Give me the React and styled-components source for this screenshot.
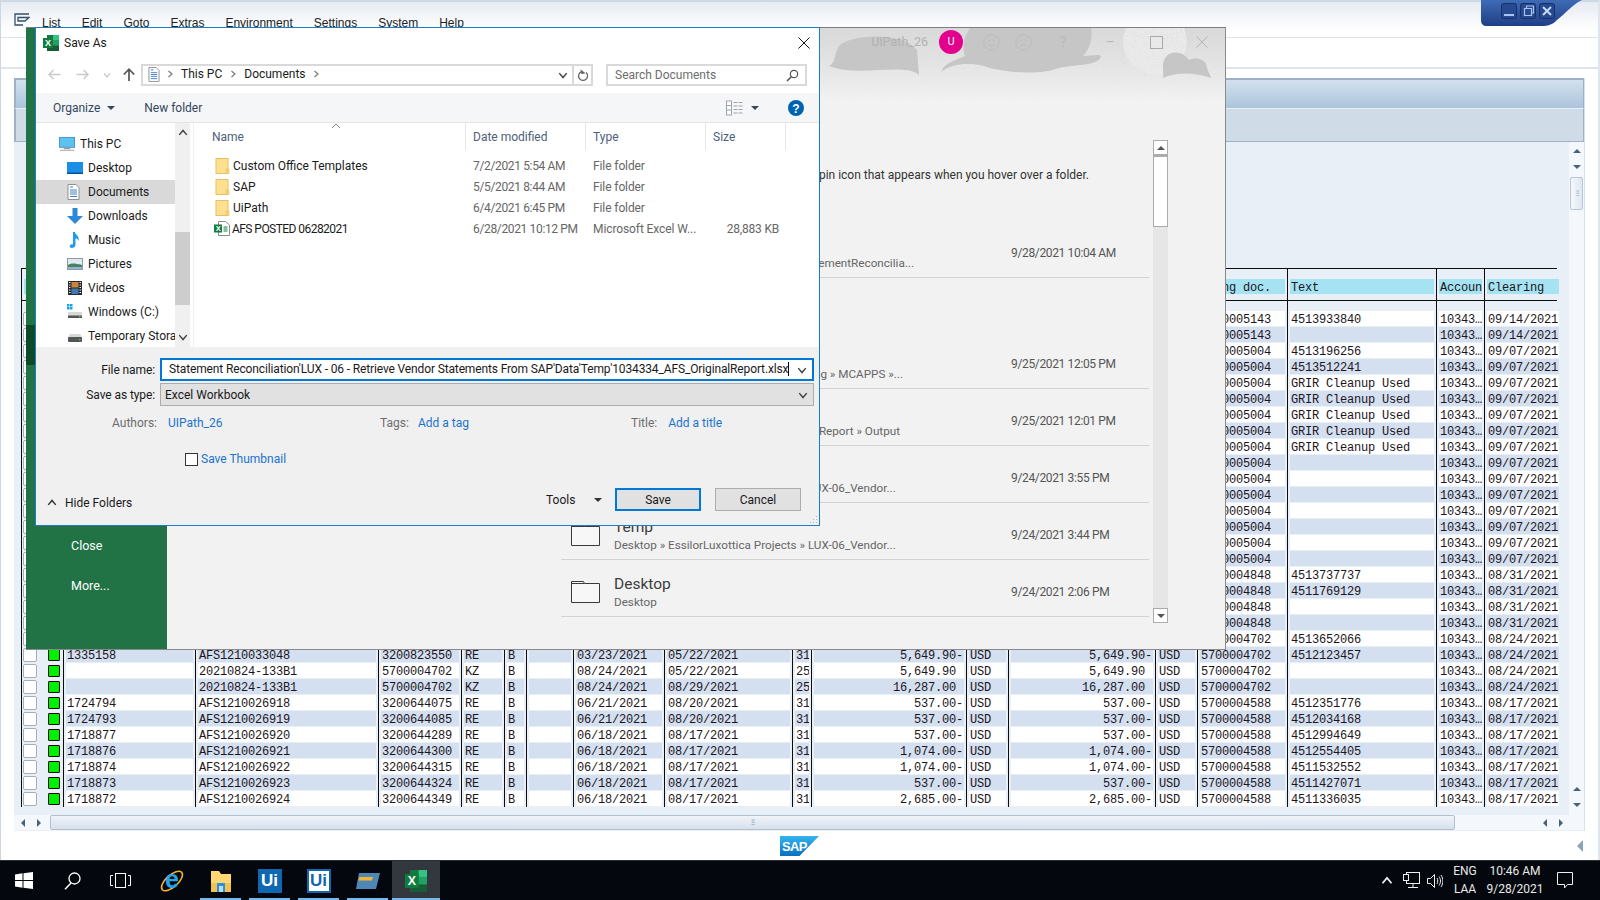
import React from 'react';
import styled, { createGlobalStyle } from 'styled-components';

const Global = createGlobalStyle`
  html, body {
    margin: 0;
    padding: 0;
    width: 1600px;
    height: 900px;
    overflow: hidden;
    background: #fff;
  }
  * { box-sizing: border-box; }
`;

const ui = `Roboto, "Liberation Sans", sans-serif`;

const Screen = styled.div`
  position: relative;
  width: 1600px;
  height: 900px;
  display: flex;
  flex-direction: column;
  font-family: ${ui};
  overflow: hidden;
`;

/* ---------- SAP window (the base of the picture) ---------- */
const SapWindow = styled.div`
  position: relative;
  height: 860px;
  display: flex;
  flex-direction: column;
  background: #fff;
  border-left: 1px solid #ccd5e1;
  border-right: 2px solid #dfe5ee;
  border-top: 2px solid #ced8e5;
`;
const SapMenu = styled.div`
  height: 36px;
  flex: none;
  display: flex;
  align-items: flex-start;
  gap: 21px;
  padding: 14px 0 0 13px;
  background: linear-gradient(#e6ebf3, #fff 80%);
  border-bottom: 1px solid #dfe4ea;
  font: 12px "Liberation Sans", sans-serif;
  color: #222;
`;
const MenuIcon = styled.svg`
  width: 16px;
  height: 13px;
  margin: -3px -9px 0 0;
`;
const SapTools = styled.div`
  height: 31px;
  flex: none;
  border-bottom: 2px solid #dfe4ea;
`;
const Panel = styled.div`
  margin: 9px 0 0 13px;
  width: 1571px;
  height: 753px;
  flex: none;
  display: flex;
  flex-direction: column;
  background: #e9eff7;
  border-right: 1px solid #d8e0ea;
`;
const BandTop = styled.div`
  height: 31px;
  flex: none;
  border-top: 2px solid #9db0c6;
  border-left: 2px solid #9db0c6;
  border-right: 1px solid #9db0c6;
  background: linear-gradient(#d2e1ed, #acc4dc);
  border-bottom: 1px solid #e8f0f7;
`;
const BandBottom = styled.div`
  height: 33px;
  flex: none;
  background: #cfdce8;
  border-left: 2px solid #9db0c6;
  border-right: 1px solid #9db0c6;
  border-bottom: 1px solid #9db0c6;
`;
const Body = styled.div`
  height: 673px;
  flex: none;
  display: flex;
`;
const TableArea = styled.div`
  flex: 1;
  padding: 126px 0 0 7px;
  overflow: hidden;
  font: 12px/18px "Liberation Mono", monospace;
  letter-spacing: -0.2px;
  color: #1b1520;
`;
const Rule = styled.div`
  width: 1536px;
  height: 1px;
  background: #0c0c0c;
`;
const Row = styled.div`
  display: grid;
  grid-template-columns: 43px 132px 183px 83px 43px 22px 47px 91px 128px 19px 155px 42px 147px 42px 90px 149px 48px 76px;
  height: ${({ $h }) => $h}px;
`;
const Cell = styled.div`
  border-right: ${({ $last }) => ($last ? 'none' : '1px solid #0c0c0c')};
  border-left: ${({ $first }) => ($first ? '1px solid #0c0c0c' : 'none')};
  padding-top: ${({ $top }) => $top || 0}px;
  min-width: 0;
`;
const Fill = styled.div`
  height: 15px;
  margin: 0 2px;
  padding: 0 1px;
  white-space: pre;
  overflow: hidden;
  text-align: ${({ $end }) => ($end ? 'right' : 'left')};
  background: ${({ $bg }) => $bg};
`;
const Mark = styled.div`
  display: flex;
  align-items: center;
  height: 15px;
  gap: 11px;
`;
const Check = styled.span`
  width: 14px;
  height: 14px;
  margin-left: 1px;
  background: #fff;
  border: 1px solid #a6aeb8;
  border-radius: 2px;
`;
const Led = styled.span`
  width: 12px;
  height: 12px;
  background: #00f000;
  border: 1px solid #0a0a0a;
  border-radius: 1px;
`;
const VScroll = styled.div`
  width: 15px;
  flex: none;
  display: flex;
  flex-direction: column;
  justify-content: space-between;
  background: #f4f7fb;
  padding: 1px 0 2px;
`;
const ScrollGroup = styled.div`
  display: flex;
  flex-direction: column;
  align-items: center;
`;
const ArrowBox = styled.span`
  width: ${({ $w }) => $w || 15}px;
  height: ${({ $h }) => $h || 16}px;
  flex: none;
  display: flex;
  align-items: center;
  justify-content: center;
  margin-top: ${({ $auto }) => ($auto ? 'auto' : '0')};
`;
const Tri = styled.span`
  width: 0;
  height: 0;
  ${({ $dir, $c, $s }) => {
    const s = $s || 4;
    const c = $c || '#47627f';
    if ($dir === 'up') return `border-left:${s}px solid transparent;border-right:${s}px solid transparent;border-bottom:${s}px solid ${c};`;
    if ($dir === 'down') return `border-left:${s}px solid transparent;border-right:${s}px solid transparent;border-top:${s}px solid ${c};`;
    if ($dir === 'left') return `border-top:${s}px solid transparent;border-bottom:${s}px solid transparent;border-right:${s}px solid ${c};`;
    return `border-top:${s}px solid transparent;border-bottom:${s}px solid transparent;border-left:${s}px solid ${c};`;
  }}
`;
const VThumb = styled.div`
  width: 13px;
  height: 33px;
  margin-top: 2px;
  border: 1px solid #b9c6d6;
  border-radius: 2px;
  background: linear-gradient(90deg, #f5f8fb, #dfe7f0);
  color: #8da0b5;
  font: 8px/31px "Liberation Sans", sans-serif;
  text-align: center;
  letter-spacing: -1px;
`;
const HScroll = styled.div`
  height: 15px;
  flex: none;
  display: flex;
  align-items: center;
  background: #f4f7fb;
  padding-right: 15px;
`;
const HThumb = styled.div`
  width: 1405px;
  height: 15px;
  margin-left: 3px;
  border: 1px solid #b2bfcf;
  border-radius: 2px;
  background: linear-gradient(#f0f4f9, #d6e0ec);
  color: #8da0b5;
  font: 8px/13px "Liberation Sans", sans-serif;
  text-align: center;
  letter-spacing: -1px;
`;
const HEnd = styled.div`
  margin-left: auto;
  display: flex;
`;
const SapFooter = styled.div`
  flex: 1;
  display: grid;
  grid-template-columns: 1fr auto 1fr;
  align-items: center;
`;
const FooterLogo = styled.div`
  grid-column: 2;
  display: flex;
`;
const FooterEnd = styled.div`
  grid-column: 3;
  justify-self: end;
  display: flex;
  padding-right: 15px;
`;
const Badge = styled.div`
  position: absolute;
  top: -2px;
  right: 14px;
  width: 103px;
  height: 27px;
`;

/* ---------- Excel backstage window ---------- */
const ExcelWindow = styled.div`
  position: absolute;
  left: 26px;
  top: 27px;
  width: 1200px;
  height: 623px;
  display: flex;
  border-top: 1px solid #7d7d7d;
  border-right: 1px solid #8a8a8a;
  border-bottom: 1px solid #8a8a8a;
  background: #f2f2f2;
`;
const Sidebar = styled.div`
  width: 141px;
  flex: none;
  background: #217346;
  display: flex;
  flex-direction: column;
  padding-top: 297px;
`;
const SideItem = styled.div`
  height: 40px;
  display: flex;
  align-items: center;
  padding-left: 45px;
  color: #fff;
  font-size: 12.5px;
  background: ${({ $active }) => ($active ? '#0e4a28' : 'transparent')};
`;
const SideGap = styled.div`
  height: 160px;
`;
const ExcelMain = styled.div`
  flex: 1;
  display: flex;
  flex-direction: column;
  min-width: 0;
`;
const TopBar = styled.div`
  position: relative;
  height: 72px;
  flex: none;
  display: flex;
  justify-content: flex-end;
  align-items: flex-start;
  overflow: hidden;
`;
const BannerArt = styled.svg`
  position: absolute;
  inset: 0;
`;
const TopName = styled.span`
  position: relative;
  margin-right: 11px;
  line-height: 28px;
  font-size: 12.5px;
  color: #b2b2b2;
`;
const Avatar = styled.span`
  position: relative;
  width: 24px;
  height: 24px;
  margin: 2px 12px 0 0;
  border-radius: 50%;
  background: #e3008c;
  color: #fff;
  font-size: 11px;
  line-height: 24px;
  text-align: center;
`;
const TopSlot = styled.span`
  position: relative;
  width: ${({ $w }) => $w}px;
  height: 28px;
  display: flex;
  align-items: center;
  justify-content: center;
  color: #b9b9b9;
  font-size: 14px;
`;
const ExcelBody = styled.div`
  flex: 1;
  display: flex;
  padding: 40px 0 0 394px;
`;
const Recents = styled.div`
  width: 588px;
  flex: none;
  color: #444;
`;
const Hint = styled.div`
  width: 528px;
  margin: 26px 0 37px;
  height: 18px;
  line-height: 18px;
  font-size: 12px;
  text-align: right;
  white-space: nowrap;
  color: #333;
`;
const RecentRow = styled.div`
  height: 57px;
  display: grid;
  grid-template-columns: 53px 397px 1fr;
  border-bottom: 1px solid #d2d2d2;
  margin-top: ${({ $mt }) => $mt || 0}px;
`;
const FolderOutline = styled.svg`
  width: 29px;
  height: 23px;
  margin: 20px 0 0 10px;
`;
const RecentText = styled.div`
  padding-top: 14px;
  min-width: 0;
`;
const RecentTitle = styled.div`
  height: 20px;
  font-size: 15.5px;
  line-height: 20px;
  color: #3c3c3c;
`;
const RecentSub = styled.div`
  height: 17px;
  line-height: 17px;
  font-size: 11.7px;
  color: #666;
  white-space: nowrap;
  text-align: ${({ $w }) => ($w ? 'right' : 'left')};
  width: ${({ $w }) => ($w ? `${$w}px` : 'auto')};
`;
const RecentDate = styled.div`
  padding-top: 24px;
  font-size: 12px;
  letter-spacing: -0.35px;
  line-height: 17px;
  color: #555;
`;
const RecentScroll = styled.div`
  width: 15px;
  height: 483px;
  margin-left: 4px;
  flex: none;
  display: flex;
  flex-direction: column;
  background: #e6e6e6;
  justify-content: flex-start;
`;
const RecentButton = styled.div`
  height: 15px;
  flex: none;
  display: flex;
  align-items: center;
  justify-content: center;
  background: #fff;
  border: 1px solid #ababab;
  margin-top: ${({ $auto }) => ($auto ? 'auto' : '0')};
`;
const RecentThumb = styled.div`
  height: 72px;
  flex: none;
  background: #fff;
  border: 1px solid #ababab;
  border-top-width: 2px;
`;

/* ---------- Save As dialog ---------- */
const Dialog = styled.div`
  position: absolute;
  left: 35px;
  top: 27px;
  width: 785px;
  height: 499px;
  display: flex;
  flex-direction: column;
  background: #fff;
  border: 1px solid #1a7dc9;
  color: #1a1a1a;
  font-size: 12px;
`;
const TitleBar = styled.div`
  height: 30px;
  flex: none;
  display: flex;
  align-items: center;
  padding-left: 7px;
  gap: 5px;
`;
const TitleClose = styled.span`
  margin-left: auto;
  width: 30px;
  height: 30px;
  display: flex;
  align-items: center;
  justify-content: center;
`;
const AddressRow = styled.div`
  height: 35px;
  flex: none;
  display: flex;
  align-items: flex-start;
  padding: 6px 0 0 4px;
`;
const NavButton = styled.span`
  width: ${({ $w }) => $w}px;
  height: 21px;
  flex: none;
  display: flex;
  align-items: center;
  justify-content: center;
`;
const Address = styled.div`
  width: 452px;
  height: 22px;
  margin-left: 1px;
  flex: none;
  display: flex;
  align-items: center;
  padding: 0 0 2px 5px;
  border: 2px solid #d9d9d9;
`;
const Crumb = styled.span`
  display: flex;
  align-items: center;
  gap: 7px;
  margin-left: ${({ $ml }) => $ml || 0}px;
`;
const AddressEnd = styled.div`
  margin-left: auto;
  display: flex;
  align-items: center;
  height: calc(100% + 2px);
  margin-bottom: -2px;
`;
const RefreshBox = styled.span`
  width: 19px;
  height: 100%;
  margin-left: 4px;
  border-left: 2px solid #d9d9d9;
  display: flex;
  align-items: center;
  justify-content: center;
`;
const SearchBox = styled.div`
  width: 201px;
  height: 22px;
  margin-left: 13px;
  flex: none;
  display: flex;
  align-items: center;
  justify-content: space-between;
  padding: 0 6px 0 7px;
  border: 2px solid #d9d9d9;
  color: #6d6d6d;
`;
const Toolbar = styled.div`
  height: 30px;
  flex: none;
  display: flex;
  align-items: center;
  padding: 0 15px 0 17px;
  background: #f5f6f7;
  border-bottom: 1px solid #e5e5e5;
  color: #33475f;
`;
const ToolItem = styled.span`
  display: flex;
  align-items: center;
  gap: 7px;
  white-space: nowrap;
  margin-left: ${({ $ml }) => $ml || 0}px;
`;
const ToolRight = styled.span`
  margin-left: auto;
  display: flex;
  align-items: center;
`;
const Browser = styled.div`
  height: 224px;
  flex: none;
  display: flex;
`;
const NavPane = styled.div`
  width: 139px;
  flex: none;
  padding-top: 9px;
  overflow: hidden;
`;
const NavItem = styled.div`
  height: 24px;
  display: flex;
  align-items: center;
  gap: 5px;
  padding-left: ${({ $top }) => ($top ? 23 : 31)}px;
  white-space: nowrap;
  background: ${({ $sel }) => ($sel ? '#d9d9d9' : 'transparent')};
`;
const NavIconBox = styled.span`
  width: 16px;
  height: 16px;
  flex: none;
  display: flex;
`;
const NavScroll = styled.div`
  width: 15px;
  flex: none;
  display: flex;
  flex-direction: column;
  background: #f0f0f0;
`;
const NavThumb = styled.div`
  height: 73px;
  margin-top: 89px;
  flex: none;
  background: #cdcdcd;
`;
const Files = styled.div`
  flex: 1;
  position: relative;
  margin-left: 3px;
  border-left: 1px solid #f0f0f0;
  min-width: 0;
`;
const FileHead = styled.div`
  height: 27px;
  display: grid;
  grid-template-columns: 272px 120px 120px 80px;
  color: #4c607a;
`;
const HeadCell = styled.span`
  display: flex;
  align-items: center;
  padding-left: ${({ $pad }) => $pad}px;
  border-right: 1px solid #e5e5e5;
`;
const SortCaret = styled.svg`
  position: absolute;
  left: 137px;
  top: 0;
  width: 10px;
  height: 6px;
`;
const FileRows = styled.div`
  padding-top: 5px;
`;
const FileRow = styled.div`
  height: 21px;
  display: grid;
  grid-template-columns: 272px 120px 120px 73px;
  align-items: center;
  color: #666;
`;
const FileName = styled.span`
  display: flex;
  align-items: center;
  gap: ${({ $tight }) => ($tight ? 2 : 3)}px;
  padding-left: ${({ $tight }) => ($tight ? 20 : 21)}px;
  letter-spacing: ${({ $tight }) => ($tight ? '-0.55px' : '0')};
  color: #1a1a1a;
`;
const FilePad = styled.span`
  padding-left: 7px;
  white-space: nowrap;
  letter-spacing: ${({ $tight }) => ($tight ? '-0.35px' : '-0.1px')};
`;
const FileSize = styled.span`
  text-align: right;
  letter-spacing: -0.2px;
`;
const FormArea = styled.div`
  position: relative;
  flex: 1;
  background: #f0f0f0;
  padding-top: 11px;
`;
const FieldRow = styled.div`
  display: flex;
  align-items: center;
  height: 23px;
  margin-top: ${({ $mt }) => $mt || 0}px;
`;
const FieldLabel = styled.span`
  width: 119px;
  text-align: right;
  flex: none;
  letter-spacing: -0.1px;
`;
const FileInput = styled.div`
  width: 654px;
  height: 23px;
  margin-left: 5px;
  display: flex;
  align-items: center;
  justify-content: space-between;
  padding: 0 5px 0 7px;
  background: ${({ $grey }) => ($grey ? '#e1e1e1' : '#fff')};
  border: ${({ $grey }) => ($grey ? '1px solid #adadad' : '2px solid #0078d7')};
  white-space: nowrap;
`;
const InputText = styled.span`
  margin-left: ${({ $plain }) => ($plain ? -3 : 0)}px;
  margin-top: ${({ $plain }) => ($plain ? 0 : -2)}px;
  letter-spacing: ${({ $plain }) => ($plain ? '0' : '-0.135px')};
  border-right: ${({ $plain }) => ($plain ? 'none' : '1px solid #000')};
`;
const MetaRow = styled.div`
  height: 18px;
  margin-top: 8px;
  display: flex;
  align-items: center;
  line-height: 18px;
`;
const MetaGroup = styled.span`
  width: ${({ $w }) => $w}px;
  flex: none;
  display: flex;
  color: #6d6d6d;
`;
const MetaLabel = styled.span`
  width: ${({ $w }) => $w}px;
  text-align: right;
  flex: none;
`;
const MetaLink = styled.span`
  color: #1a73d1;
  margin-left: ${({ $ml }) => $ml}px;
`;
const ThumbRow = styled.div`
  height: 18px;
  margin-top: 18px;
  padding-left: 149px;
  display: flex;
  align-items: center;
  gap: 3px;
  color: #1a73d1;
`;
const ThumbBox = styled.span`
  width: 13px;
  height: 13px;
  background: #fff;
  border: 1px solid #333;
`;
const BottomRow = styled.div`
  height: 23px;
  margin-top: 20px;
  display: flex;
  align-items: center;
  padding: 0 18px 0 11px;
`;
const HideFolders = styled.span`
  display: flex;
  align-items: center;
  gap: 8px;
  padding-top: 6px;
`;
const ToolsMenu = styled.span`
  margin-left: auto;
  width: 69px;
  display: flex;
  align-items: center;
  gap: 19px;
`;
const ActionButton = styled.span`
  width: 86px;
  height: 23px;
  margin-left: ${({ $ml }) => $ml || 0}px;
  display: flex;
  align-items: center;
  justify-content: center;
  background: #e1e1e1;
  border: ${({ $primary }) => ($primary ? '2px solid #0078d7' : '1px solid #adadad')};
`;
const Grip = styled.svg`
  position: absolute;
  right: 1px;
  bottom: 1px;
  width: 9px;
  height: 9px;
`;

/* ---------- Windows taskbar ---------- */
const Taskbar = styled.div`
  height: 40px;
  flex: none;
  display: flex;
  align-items: stretch;
  background: #04080e;
  border-top: 1px solid #2b3035;
  color: #e8e8e8;
`;
const TaskSlot = styled.div`
  position: relative;
  width: ${({ $w }) => $w || 48}px;
  flex: none;
  display: flex;
  align-items: center;
  justify-content: center;
  background: ${({ $active }) => ($active ? '#33383e' : 'transparent')};
  margin-left: ${({ $ml }) => $ml || 0}px;
`;
const Running = styled.span`
  position: absolute;
  left: ${({ $full }) => ($full ? 0 : 4)}px;
  right: ${({ $full }) => ($full ? 0 : 4)}px;
  bottom: 0;
  height: 2px;
  background: #76b9ed;
`;
const UiTile = styled.span`
  width: 24px;
  height: 24px;
  display: flex;
  align-items: center;
  justify-content: center;
  font: bold 17px "Liberation Sans", sans-serif;
  background: ${({ $light }) => ($light ? '#fff' : '#0f67b1')};
  color: ${({ $light }) => ($light ? '#0f67b1' : '#fff')};
  border: ${({ $light }) => ($light ? '2px solid #0f67b1' : 'none')};
`;
const Tray = styled.div`
  margin-left: auto;
  display: flex;
  align-items: center;
  padding-right: 15px;
`;
const TrayIcon = styled.span`
  width: ${({ $w }) => $w}px;
  display: flex;
  justify-content: center;
`;
const TrayText = styled.div`
  display: flex;
  flex-direction: column;
  align-items: center;
  gap: 3px;
  font-size: 12px;
  line-height: 15px;
  width: ${({ $w }) => $w}px;
  flex: none;
  margin-left: ${({ $ml }) => $ml || 0}px;
`;

/* ---------- drawings ---------- */
const Excel = ({ size = 16 }) => (
  <svg width={size} height={size} viewBox="0 0 16 16">
    <rect x="4" y="0" width="12" height="16" rx="1" fill="#21a366" />
    <rect x="4" y="0" width="6" height="5" fill="#107c41" />
    <rect x="10" y="0" width="6" height="5" fill="#33c481" />
    <rect x="10" y="5" width="6" height="5.5" fill="#21a366" />
    <rect x="4" y="10.5" width="12" height="5.5" fill="#185c37" />
    <rect x="0" y="3" width="10" height="10" fill="#107c41" />
    <text x="5" y="11" textAnchor="middle" fontSize="9" fontWeight="700" fontFamily="Liberation Sans" fill="#fff">X</text>
  </svg>
);
const YellowFolder = () => (
  <svg width="15" height="16" viewBox="0 0 15 16">
    <rect x="1" y="0.5" width="12" height="15" fill="#ffe08f" stroke="#e5c165" />
    <rect x="11" y="11" width="3" height="4.5" fill="#f5d277" stroke="#e5c165" strokeWidth=".6" />
  </svg>
);
const XlsxFile = () => (
  <svg width="16" height="15" viewBox="0 0 16 15">
    <path d="M4.5.5h7l4 3.5v10.500h-11z" fill="#fff" stroke="#8b8b8b" />
    <rect x="0" y="3.500" width="8" height="8" fill="#107c41" />
    <text x="4" y="10" textAnchor="middle" fontSize="7.500" fontWeight="700" fontFamily="Liberation Sans" fill="#fff">X</text>
    <path d="M9.500 6h4M9.500 8h4M9.500 10h4" stroke="#107c41" />
  </svg>
);
const DocIcon = ({ size = 13 }) => (
  <svg width={size} height={size + 3} viewBox="0 0 13 16">
    <path d="M1 .5h8l3 3v12H1z" fill="#fff" stroke="#8f8f8f" />
    <path d="M3 3h3M3 6h7M3 8h7M3 10h7M3 12.500h7" stroke="#3f7fc4" />
  </svg>
);
const Chevron = ({ dir = 'right', c = '#7a7a7a', s = 8 }) => {
  const d = {
    right: 'M2.500 1l3.500 3-3.500 3',
    down: 'M1 2.500l3 3.500 3-3.500',
    up: 'M1 5.500l3-3.500 3 3.500',
  }[dir];
  return (
    <svg width={s} height={s} viewBox="0 0 8 8">
      <path d={d} fill="none" stroke={c} strokeWidth="1.200" />
    </svg>
  );
};
const ArrowLine = ({ flip, c }) => (
  <svg width="13" height="11" viewBox="0 0 13 11" style={flip ? { transform: 'scaleX(-1)' } : undefined}>
    <path d="M12.500 5.500H1.500M5.500 1L1 5.500 5.500 10" fill="none" stroke={c} strokeWidth="1.400" />
  </svg>
);
const UpArrow = () => (
  <svg width="12" height="13" viewBox="0 0 12 13">
    <path d="M6 13V1.500M.8 6.500L6 1.200l5.200 5.300" fill="none" stroke="#555" strokeWidth="1.700" />
  </svg>
);
const Refresh = () => (
  <svg width="12" height="13" viewBox="0 0 12 13">
    <path d="M4.200 2.800A4.500 4.500 0 1 0 9 3.500" fill="none" stroke="#666" strokeWidth="1.300" />
    <path d="M3.800 0v5H8z" fill="#666" transform="rotate(-12 5 2)" />
  </svg>
);
const Magnifier = () => (
  <svg width="13" height="13" viewBox="0 0 13 13">
    <circle cx="8" cy="5" r="3.700" fill="none" stroke="#555" strokeWidth="1.200" />
    <path d="M5.300 7.700L1 12" stroke="#555" strokeWidth="1.600" />
  </svg>
);
const Close = ({ c = '#111', s = 12 }) => (
  <svg width={s} height={s} viewBox="0 0 12 12">
    <path d="M.5.500l11 11M11.500.500l-11 11" stroke={c} fill="none" />
  </svg>
);
const ViewIcon = () => (
  <svg width="17" height="16" viewBox="0 0 17 16">
    <rect x=".5" y="1" width="5" height="14" fill="#fff" stroke="#9aa4ae" />
    <path d="M1 5.500h4M1 10h4" stroke="#9aa4ae" />
    <path d="M7.500 2.500h9M7.500 6h9M7.500 9.500h9M7.500 13h9" stroke="#9aa4ae" strokeDasharray="4 1" />
  </svg>
);
const Help = () => (
  <svg width="16" height="16" viewBox="0 0 16 16">
    <circle cx="8" cy="8" r="8" fill="#0063b1" />
    <text x="8" y="12.500" textAnchor="middle" fontSize="12" fontWeight="700" fontFamily="Liberation Sans" fill="#fff">?</text>
  </svg>
);
const navIcons = {
  pc: (
    <svg width="17" height="16" viewBox="0 0 17 16">
      <rect x=".5" y="1" width="16" height="10.500" fill="#5cc3f0" stroke="#4a91c7" />
      <rect x="5" y="12" width="7" height="1.500" fill="#9a9a9a" />
      <rect x="1" y="14" width="15" height="1.500" fill="#bdbdbd" />
    </svg>
  ),
  desktop: (
    <svg width="16" height="16" viewBox="0 0 16 16">
      <rect x="0" y="2" width="16" height="12" fill="#1b8fe8" />
      <rect x="0" y="12.500" width="16" height="1.500" fill="#0a4e95" />
    </svg>
  ),
  documents: <DocIcon size={13} />,
  downloads: (
    <svg width="16" height="16" viewBox="0 0 16 16">
      <path d="M5.500 0h5v8H16l-8 8-8-8h5.500z" fill="#2f88d8" />
    </svg>
  ),
  music: (
    <svg width="16" height="16" viewBox="0 0 16 16">
      <path d="M6 0h2c0 3 5 3.500 3.500 9C11 7 9.500 6.500 8.500 6.500V13c0 2-2 3-4 3s-2.500-2-1-3.200C4 12 5 12 6 12.500z" fill="#1e9be9" />
    </svg>
  ),
  pictures: (
    <svg width="16" height="16" viewBox="0 0 16 16">
      <rect x=".5" y="2.500" width="15" height="11" fill="#dfe9f3" stroke="#8f9aa5" />
      <path d="M1 9c3-2 6-2 14 0v4H1z" fill="#4d7f5e" />
      <rect x="1" y="11" width="14" height="2" fill="#8fb5d6" />
    </svg>
  ),
  videos: (
    <svg width="16" height="16" viewBox="0 0 16 16">
      <rect x="1" y="1" width="14" height="14" fill="#2b2b2b" />
      <rect x="4.500" y="2" width="7" height="5.500" fill="#c9843f" />
      <rect x="4.500" y="8.500" width="7" height="5.500" fill="#3f79b5" />
      <path d="M2 2.500h1.500M2 5h1.500M2 7.500h1.500M2 10h1.500M2 12.500h1.500M12.500 2.500H14M12.500 5H14M12.500 7.500H14M12.500 10H14M12.500 12.500H14" stroke="#eee" />
    </svg>
  ),
  windows: (
    <svg width="16" height="16" viewBox="0 0 16 16">
      <path d="M0 0h2.500v2.500H0zM3 0h2.500v2.500H3zM0 3h2.500v2.500H0zM3 3h2.500v2.500H3z" fill="#19a3e8" />
      <rect x="1" y="8" width="14" height="6" rx="1" fill="#d8d8d8" />
      <rect x="1" y="11.500" width="14" height="2.500" fill="#555" />
      <rect x="12" y="12" width="1.500" height="1.200" fill="#4bd34b" />
    </svg>
  ),
  drive: (
    <svg width="16" height="16" viewBox="0 0 16 16">
      <path d="M3 6h10l2 3H1z" fill="#d8d8d8" />
      <rect x="1" y="9" width="14" height="5" rx="1" fill="#555" />
      <rect x="12" y="11" width="1.500" height="1.200" fill="#4bd34b" />
    </svg>
  ),
};
const FolderLine = () => (
  <FolderOutline viewBox="0 0 29 23">
    <path d="M.5 22.500V1.500h12l1 2h15v19z" fill="#f7f7f7" stroke="#3a3a3a" />
    <path d="M.5 3.500h13" stroke="#3a3a3a" />
  </FolderOutline>
);
const Banner = () => (
  <BannerArt width="1058" height="72" viewBox="168 28 1058 72">
    <defs>
      <linearGradient id="fade" x1="0" y1="0" x2="0" y2="1">
        <stop offset="0" stopColor="#d8d8d8" />
        <stop offset="1" stopColor="#f2f2f2" />
      </linearGradient>
      <linearGradient id="speckFade" x1="0" y1="0" x2="0" y2="1">
        <stop offset="0" stopColor="#fff" stopOpacity=".9" />
        <stop offset="1" stopColor="#fff" stopOpacity="0" />
      </linearGradient>
      <mask id="speckMask">
        <rect x="168" y="28" width="1058" height="72" fill="url(#speckFade)" />
      </mask>
      <filter id="speck" x="0" y="0" width="100%" height="100%">
        <feTurbulence type="fractalNoise" baseFrequency="1.100" numOctaves="2" seed="4" />
        <feColorMatrix values="0 0 0 0 .72 0 0 0 0 .72 0 0 0 0 .72 3 0 0 0 -1.300" />
      </filter>
    </defs>
    <rect x="168" y="28" width="1058" height="72" fill="url(#fade)" />
    <circle cx="1156" cy="42" r="32" fill="#ebebeb" />
    <rect x="168" y="28" width="1058" height="72" filter="url(#speck)" mask="url(#speckMask)" />
    <g fill="#c6c6c6">
      <path d="M830 66C838 62 835 50 842 44C856 34 905 32 918 50L920 75C905 62 860 78 830 66Z" />
      <path d="M942 72C946 62 958 60 966 56C962 46 966 34 972 27L1092 27C1094 40 1090 50 1084 56C1092 56 1100 54 1102 56C1100 66 1078 64 1060 68C1040 76 1000 72 985 66C968 62 952 64 942 72Z" />
      <path d="M1164 78C1166 70 1160 62 1170 54C1178 50 1186 54 1190 60C1198 56 1208 60 1208 68L1212 78C1196 72 1176 72 1164 78Z" />
    </g>
  </BannerArt>
);
const Face = ({ sad }) => (
  <svg width="17" height="17" viewBox="0 0 17 17">
    <circle cx="8.500" cy="8.500" r="7.800" fill="none" stroke="#bcbcbc" />
    <circle cx="6" cy="6.500" r=".9" fill="#bcbcbc" />
    <circle cx="11" cy="6.500" r=".9" fill="#bcbcbc" />
    <path d={sad ? 'M5 12c2-2 5-2 7 0' : 'M5 10.500c2 2 5 2 7 0'} fill="none" stroke="#bcbcbc" />
  </svg>
);
const WindowBadge = () => (
  <svg width="103" height="27" viewBox="0 0 103 27">
    <defs>
      <linearGradient id="badge" x1="0" y1="0" x2="0" y2="1">
        <stop offset="0" stopColor="#3e6bb5" />
        <stop offset="1" stopColor="#1f3f86" />
      </linearGradient>
    </defs>
    <path d="M0 0H101C92 4 84 14 76 20C72 24 68 26 60 26H6C2 26 0 24 0 20Z" fill="url(#badge)" />
    <g fill="#26498f" stroke="#16306c">
      <rect x="20.500" y="3.500" width="15" height="15" rx="2" />
      <rect x="39.500" y="3.500" width="15" height="15" rx="2" />
      <rect x="58.500" y="3.500" width="15" height="15" rx="2" />
    </g>
    <rect x="23" y="14" width="10" height="2" fill="#a8c4f0" />
    <path d="M43.500 8.500h7v7h-7zM45.500 8.500v-2.500h7v7h-2" fill="none" stroke="#a8c4f0" strokeWidth="1.200" />
    <path d="M62 7l8 8M70 7l-8 8" stroke="#c6d8f5" strokeWidth="2" />
  </svg>
);
const SapLogo = () => (
  <svg width="39" height="20" viewBox="0 0 39 20">
    <defs>
      <linearGradient id="sap" x1="0" y1="0" x2="0" y2="1">
        <stop offset="0" stopColor="#33b5ee" />
        <stop offset="1" stopColor="#0a6fc2" />
      </linearGradient>
    </defs>
    <path d="M0 0H39L19.500 20H0Z" fill="url(#sap)" />
    <text x="2" y="14.500" fontSize="13" fontWeight="700" fontFamily="Liberation Sans" fill="#fff" letterSpacing="-.6">SAP</text>
  </svg>
);
const WinLogo = () => (
  <svg width="18" height="17" viewBox="0 0 18 17">
    <path d="M0 2.400L7.500 1.300V8H0zM8.500 1.200L18 0v8H8.500zM0 9h7.500v6.700L0 14.600zM8.500 9H18v8l-9.500-1.200z" fill="#fff" />
  </svg>
);
const TaskSearch = () => (
  <svg width="17" height="18" viewBox="0 0 17 18">
    <circle cx="10.500" cy="6.500" r="5.500" fill="none" stroke="#fff" strokeWidth="1.300" />
    <path d="M7 11L1 17.300" stroke="#fff" strokeWidth="1.500" />
  </svg>
);
const TaskView = () => (
  <svg width="21" height="15" viewBox="0 0 21 15">
    <rect x="5.500" y=".5" width="10" height="14" fill="none" stroke="#fff" />
    <path d="M3 2.500H.5v10H3M18 2.500h2.500v10H18" fill="none" stroke="#fff" />
  </svg>
);
const IeIcon = () => (
  <svg width="26" height="26" viewBox="0 0 26 26">
    <ellipse cx="13" cy="13" rx="13" ry="6" transform="rotate(-42 13 13)" fill="none" stroke="#f0b428" strokeWidth="1.600" />
    <text x="13" y="20" textAnchor="middle" fontSize="25" fontWeight="700" fontFamily="Liberation Sans" fill="#27a3e8">e</text>
  </svg>
);
const ExplorerIcon = () => (
  <svg width="22" height="22" viewBox="0 0 22 22">
    <path d="M1 1h8l2 3h10v18H1z" fill="#ffd873" />
    <rect x="1" y="13" width="20" height="9" fill="#f2c14e" />
    <rect x="7" y="13" width="8" height="9" fill="#2f8ee0" />
    <rect x="9" y="16" width="4" height="6" fill="#b7defa" />
  </svg>
);
const SapLogon = () => (
  <svg width="24" height="16" viewBox="0 0 24 16">
    <path d="M3 0H24L20 16H0z" fill="#4f86b5" />
    <path d="M3.500 4H17l-1 3.500H2.500z" fill="#f2b632" />
  </svg>
);
const TrayNet = () => (
  <svg width="17" height="18" viewBox="0 0 17 18">
    <rect x="3.500" y=".5" width="13" height="11" fill="none" stroke="#eee" />
    <rect x=".5" y="2.500" width="5" height="6" fill="#04080e" stroke="#eee" />
    <path d="M10 12v3M5 15.500h10" stroke="#eee" />
  </svg>
);
const TrayVolume = () => (
  <svg width="16" height="16" viewBox="0 0 16 16">
    <path d="M.5 5.500h3l4-4v13l-4-4h-3z" fill="none" stroke="#eee" />
    <path d="M10 5c1 2 1 4 0 6M12 3.500c2 3 2 6 0 9M14 2c2.500 4 2.500 8 0 12" fill="none" stroke="#eee" />
  </svg>
);
const TrayNote = () => (
  <svg width="17" height="17" viewBox="0 0 17 17">
    <path d="M.5.500h15v12h-5l-3 3.500v-3.500h-7z" fill="none" stroke="#eee" />
  </svg>
);

/* ---------- data ---------- */
const blue = '#d4dff0';
const head = ['', '', '', '', '', '', '', '', '', '', '', '', '', '', 'Clrng doc.', 'Text', 'Accoun', 'Clearing'];

const tailRows = [
  ['5700005143', '4513933840', '09/14/2021'],
  ['5700005143', '', '09/14/2021'],
  ['5700005004', '4513196256', '09/07/2021'],
  ['5700005004', '4513512241', '09/07/2021'],
  ['5700005004', 'GRIR Cleanup Used', '09/07/2021'],
  ['5700005004', 'GRIR Cleanup Used', '09/07/2021'],
  ['5700005004', 'GRIR Cleanup Used', '09/07/2021'],
  ['5700005004', 'GRIR Cleanup Used', '09/07/2021'],
  ['5700005004', 'GRIR Cleanup Used', '09/07/2021'],
  ['5700005004', '', '09/07/2021'],
  ['5700005004', '', '09/07/2021'],
  ['5700005004', '', '09/07/2021'],
  ['5700005004', '', '09/07/2021'],
  ['5700005004', '', '09/07/2021'],
  ['5700005004', '', '09/07/2021'],
  ['5700005004', '', '09/07/2021'],
  ['5700004848', '4513737737', '08/31/2021'],
  ['5700004848', '4511769129', '08/31/2021'],
  ['5700004848', '', '08/31/2021'],
  ['5700004848', '', '08/31/2021'],
  ['5700004702', '4513652066', '08/24/2021'],
];
const fullRows = [
  ['1335158', 'AFS1210033048', '3200823550', 'RE', '03/23/2021', '05/22/2021', '31', '5,649.90-', '5700004702', '4512123457', '08/24/2021'],
  ['', '20210824-133B1', '5700004702', 'KZ', '08/24/2021', '05/22/2021', '25', '5,649.90 ', '5700004702', '', '08/24/2021'],
  ['', '20210824-133B1', '5700004702', 'KZ', '08/24/2021', '08/29/2021', '25', '16,287.00 ', '5700004702', '', '08/24/2021'],
  ['1724794', 'AFS1210026918', '3200644075', 'RE', '06/21/2021', '08/20/2021', '31', '537.00-', '5700004588', '4512351776', '08/17/2021'],
  ['1724793', 'AFS1210026919', '3200644085', 'RE', '06/21/2021', '08/20/2021', '31', '537.00-', '5700004588', '4512034168', '08/17/2021'],
  ['1718877', 'AFS1210026920', '3200644289', 'RE', '06/18/2021', '08/17/2021', '31', '537.00-', '5700004588', '4512994649', '08/17/2021'],
  ['1718876', 'AFS1210026921', '3200644300', 'RE', '06/18/2021', '08/17/2021', '31', '1,074.00-', '5700004588', '4512554405', '08/17/2021'],
  ['1718874', 'AFS1210026922', '3200644315', 'RE', '06/18/2021', '08/17/2021', '31', '1,074.00-', '5700004588', '4511532552', '08/17/2021'],
  ['1718873', 'AFS1210026923', '3200644324', 'RE', '06/18/2021', '08/17/2021', '31', '537.00-', '5700004588', '4511427071', '08/17/2021'],
  ['1718872', 'AFS1210026924', '3200644349', 'RE', '06/18/2021', '08/17/2021', '31', '2,685.00-', '5700004588', '4511336035', '08/17/2021'],
];
const rightOnly = tailRows.map(([doc, text, date]) => ['', '', '', '', '', '', '', '', '', '', '', '', '', '', doc, text, '10343…', date]);
const fullCols = fullRows.map(([a, b, c, d, e, f, g, amt, doc, text, date]) => ['', a, b, c, d, 'B', '', e, f, g, amt, 'USD', amt, 'USD', doc, text, '10343…', date]);
const rows = [...rightOnly, ...fullCols];
const amountCols = [10, 12];

const navItems = [
  ['pc', 'This PC', true],
  ['desktop', 'Desktop'],
  ['documents', 'Documents', false, true],
  ['downloads', 'Downloads'],
  ['music', 'Music'],
  ['pictures', 'Pictures'],
  ['videos', 'Videos'],
  ['windows', 'Windows (C:)'],
  ['drive', 'Temporary Storage (D:)'],
];
const recent = [
  { sub: 'Desktop » LUX-06 » StatementReconcilia...', w: 300, date: '9/28/2021 10:04 AM' },
  { sub: 'Desktop » Training » MCAPPS »...', w: 289, date: '9/25/2021 12:05 PM', mt: 54 },
  { sub: 'Desktop » Data » Report » Output', w: 286, date: '9/25/2021 12:01 PM' },
  { sub: 'Desktop » EssilorLuxottica Projects » LUX-06_Vendor...', date: '9/24/2021 3:55 PM' },
  { title: 'Temp', sub: 'Desktop » EssilorLuxottica Projects » LUX-06_Vendor...', date: '9/24/2021 3:44 PM' },
  { title: 'Desktop', sub: 'Desktop', date: '9/24/2021 2:06 PM' },
];

const TableRow = ({ row, index }) => (
  <Row $h={16}>
    {row.map((value, i) => {
      if (i === 0) {
        return (
          <Cell key={i} $first>
            <Mark>
              <Check />
              <Led />
            </Mark>
          </Cell>
        );
      }
      return (
        <Cell key={i} $last={i === 17}>
          <Fill $bg={index % 2 ? blue : '#fff'} $end={amountCols.includes(i)}>{value}</Fill>
        </Cell>
      );
    })}
  </Row>
);

export default function App() {
  return (
    <Screen>
      <Global />

      <SapWindow>
        <SapMenu>
          <MenuIcon viewBox="0 0 16 13">
            <path d="M15 1H1v11h8M4 4.500h11L11 8H4z" fill="none" stroke="#334f6e" strokeWidth="1.300" />
          </MenuIcon>
          {['List', 'Edit', 'Goto', 'Extras', 'Environment', 'Settings', 'System', 'Help'].map((m) => (
            <span key={m}>{m}</span>
          ))}
        </SapMenu>
        <SapTools />
        <Panel>
          <BandTop />
          <BandBottom />
          <Body>
            <TableArea>
              <Rule />
              <Row $h={31}>
                {head.map((h, i) => (
                  <Cell key={i} $first={i === 0} $last={i === 17} $top={10}>
                    <Fill $bg="#a5e3f3">{h}</Fill>
                  </Cell>
                ))}
              </Row>
              <Rule />
              <Row $h={10}>
                {head.map((h, i) => (
                  <Cell key={i} $first={i === 0} $last={i === 17} />
                ))}
              </Row>
              {rows.map((row, i) => (
                <TableRow key={i} row={row} index={i} />
              ))}
            </TableArea>
            <VScroll>
              <ScrollGroup>
                <ArrowBox $h={16}><Tri $dir="up" /></ArrowBox>
                <ArrowBox $h={16}><Tri $dir="down" /></ArrowBox>
                <VThumb>⁝⁝</VThumb>
              </ScrollGroup>
              <ScrollGroup>
                <ArrowBox $h={16}><Tri $dir="up" /></ArrowBox>
                <ArrowBox $h={16}><Tri $dir="down" /></ArrowBox>
              </ScrollGroup>
            </VScroll>
          </Body>
          <HScroll>
            <ArrowBox $w={17}><Tri $dir="left" /></ArrowBox>
            <ArrowBox $w={16}><Tri $dir="right" /></ArrowBox>
            <HThumb>⁝⁝⁝</HThumb>
            <HEnd>
              <ArrowBox $w={17}><Tri $dir="left" /></ArrowBox>
              <ArrowBox $w={16}><Tri $dir="right" /></ArrowBox>
            </HEnd>
          </HScroll>
        </Panel>
        <SapFooter>
          <FooterLogo><SapLogo /></FooterLogo>
          <FooterEnd><Tri $dir="left" $s={6} $c="#8ea3b8" /></FooterEnd>
        </SapFooter>
        <Badge><WindowBadge /></Badge>
      </SapWindow>

      <Taskbar>
        <TaskSlot><WinLogo /></TaskSlot>
        <TaskSlot><TaskSearch /></TaskSlot>
        <TaskSlot><TaskView /></TaskSlot>
        <TaskSlot $ml={3} $w={49}><IeIcon /></TaskSlot>
        <TaskSlot $w={49}><ExplorerIcon /><Running /></TaskSlot>
        <TaskSlot $w={49}><UiTile>Ui</UiTile><Running /></TaskSlot>
        <TaskSlot $w={49}><UiTile $light>Ui</UiTile><Running /></TaskSlot>
        <TaskSlot $w={49}><SapLogon /><Running /></TaskSlot>
        <TaskSlot $active><Excel size={22} /><Running $full /></TaskSlot>
        <Tray>
          <TrayIcon $w={24}><Chevron dir="up" c="#eee" s={12} /></TrayIcon>
          <TrayIcon $w={24}><TrayNet /></TrayIcon>
          <TrayIcon $w={24}><TrayVolume /></TrayIcon>
          <TrayText $w={34} $ml={1}><span>ENG</span><span>LAA</span></TrayText>
          <TrayText $w={60} $ml={3}><span>10:46 AM</span><span>9/28/2021</span></TrayText>
          <TrayIcon $w={40}><TrayNote /></TrayIcon>
        </Tray>
      </Taskbar>

      <ExcelWindow>
        <Sidebar>
          <SideItem $active />
          <SideGap />
          <SideItem>Close</SideItem>
          <SideItem>More...</SideItem>
        </Sidebar>
        <ExcelMain>
          <TopBar>
            <Banner />
            <TopName>UIPath_26</TopName>
            <Avatar>U</Avatar>
            <TopSlot $w={32}><Face /></TopSlot>
            <TopSlot $w={32}><Face sad /></TopSlot>
            <TopSlot $w={48}>?</TopSlot>
            <TopSlot $w={46}>–</TopSlot>
            <TopSlot $w={46}>
              <svg width="13" height="13" viewBox="0 0 13 13"><rect x=".5" y=".5" width="12" height="12" fill="none" stroke="#aaa" /></svg>
            </TopSlot>
            <TopSlot $w={46}><Close c="#b4b4b4" /></TopSlot>
          </TopBar>
          <ExcelBody>
            <Recents>
              <Hint>the pin icon that appears when you hover over a folder.</Hint>
              {recent.map((r) => (
                <RecentRow key={r.date} $mt={r.mt}>
                  {r.title ? <FolderLine /> : <span />}
                  <RecentText>
                    <RecentTitle>{r.title}</RecentTitle>
                    <RecentSub $w={r.w}>{r.sub}</RecentSub>
                  </RecentText>
                  <RecentDate>{r.date}</RecentDate>
                </RecentRow>
              ))}
            </Recents>
            <RecentScroll>
              <RecentButton><Tri $dir="up" $c="#555" /></RecentButton>
              <RecentThumb />
              <RecentButton $auto><Tri $dir="down" $c="#555" /></RecentButton>
            </RecentScroll>
          </ExcelBody>
        </ExcelMain>
      </ExcelWindow>

      <Dialog>
        <TitleBar>
          <Excel />
          <span>Save As</span>
          <TitleClose><Close /></TitleClose>
        </TitleBar>
        <AddressRow>
          <NavButton $w={28}><ArrowLine c="#c9c9c9" /></NavButton>
          <NavButton $w={28}><ArrowLine flip c="#c9c9c9" /></NavButton>
          <NavButton $w={21}><Chevron dir="down" c="#c9c9c9" /></NavButton>
          <NavButton $w={23}><UpArrow /></NavButton>
          <Address>
            <DocIcon size={12} />
            <Crumb $ml={6}><Chevron /> This PC</Crumb>
            <Crumb $ml={7}><Chevron /> Documents</Crumb>
            <Crumb $ml={6}><Chevron /></Crumb>
            <AddressEnd>
              <Chevron dir="down" c="#444" s={10} />
              <RefreshBox><Refresh /></RefreshBox>
            </AddressEnd>
          </Address>
          <SearchBox>
            <span>Search Documents</span>
            <Magnifier />
          </SearchBox>
        </AddressRow>
        <Toolbar>
          <ToolItem>Organize <Tri $dir="down" $c="#33475f" /></ToolItem>
          <ToolItem $ml={29}>New folder</ToolItem>
          <ToolRight>
            <ViewIcon />
            <ToolItem $ml={8}><Tri $dir="down" $c="#33475f" /></ToolItem>
            <ToolItem $ml={29}><Help /></ToolItem>
          </ToolRight>
        </Toolbar>
        <Browser>
          <NavPane>
            {navItems.map(([icon, label, top, sel]) => (
              <NavItem key={label} $top={top} $sel={sel}>
                <NavIconBox>{navIcons[icon]}</NavIconBox>
                <span>{label}</span>
              </NavItem>
            ))}
          </NavPane>
          <NavScroll>
            <ArrowBox $h={20}><Chevron dir="up" c="#444" s={10} /></ArrowBox>
            <NavThumb />
            <ArrowBox $h={20} $auto><Chevron dir="down" c="#444" s={10} /></ArrowBox>
          </NavScroll>
          <Files>
            <SortCaret viewBox="0 0 10 6"><path d="M1 5l4-4 4 4" fill="none" stroke="#8a8a8a" /></SortCaret>
            <FileHead>
              <HeadCell $pad={18}>Name</HeadCell>
              <HeadCell $pad={7}>Date modified</HeadCell>
              <HeadCell $pad={7}>Type</HeadCell>
              <HeadCell $pad={7}>Size</HeadCell>
            </FileHead>
            <FileRows>
              <FileRow>
                <FileName><YellowFolder /> Custom Office Templates</FileName>
                <FilePad $tight>7/2/2021 5:54 AM</FilePad>
                <FilePad>File folder</FilePad>
              </FileRow>
              <FileRow>
                <FileName><YellowFolder /> SAP</FileName>
                <FilePad $tight>5/5/2021 8:44 AM</FilePad>
                <FilePad>File folder</FilePad>
              </FileRow>
              <FileRow>
                <FileName><YellowFolder /> UiPath</FileName>
                <FilePad $tight>6/4/2021 6:45 PM</FilePad>
                <FilePad>File folder</FilePad>
              </FileRow>
              <FileRow>
                <FileName $tight><XlsxFile /> AFS POSTED 06282021</FileName>
                <FilePad $tight>6/28/2021 10:12 PM</FilePad>
                <FilePad>Microsoft Excel W...</FilePad>
                <FileSize>28,883 KB</FileSize>
              </FileRow>
            </FileRows>
          </Files>
        </Browser>
        <FormArea>
          <FieldRow>
            <FieldLabel>File name:</FieldLabel>
            <FileInput>
              <InputText>Statement Reconciliation'LUX - 06 - Retrieve Vendor Statements From SAP'Data'Temp'1034334_AFS_OriginalReport.xlsx</InputText>
              <Chevron dir="down" c="#444" s={10} />
            </FileInput>
          </FieldRow>
          <FieldRow $mt={2}>
            <FieldLabel>Save as type:</FieldLabel>
            <FileInput $grey>
              <InputText $plain>Excel Workbook</InputText>
              <Chevron dir="down" c="#444" s={10} />
            </FileInput>
          </FieldRow>
          <MetaRow>
            <MetaGroup $w={344}>
              <MetaLabel $w={121}>Authors:</MetaLabel>
              <MetaLink $ml={11}>UIPath_26</MetaLink>
            </MetaGroup>
            <MetaGroup $w={251}>
              <span>Tags:</span>
              <MetaLink $ml={9}>Add a tag</MetaLink>
            </MetaGroup>
            <MetaGroup $w={170}>
              <span>Title:</span>
              <MetaLink $ml={11}>Add a title</MetaLink>
            </MetaGroup>
          </MetaRow>
          <ThumbRow>
            <ThumbBox />
            <span>Save Thumbnail</span>
          </ThumbRow>
          <BottomRow>
            <HideFolders>
              <Chevron dir="up" c="#333" s={10} />
              Hide Folders
            </HideFolders>
            <ToolsMenu>Tools <Tri $dir="down" $c="#333" /></ToolsMenu>
            <ActionButton $primary>Save</ActionButton>
            <ActionButton $ml={14}>Cancel</ActionButton>
          </BottomRow>
          <Grip viewBox="0 0 9 9">
            <path d="M7 1h1v1H7zM4 4h1v1H4zM7 4h1v1H7zM1 7h1v1H1zM4 7h1v1H4zM7 7h1v1H7z" fill="#b5b5b5" />
          </Grip>
        </FormArea>
      </Dialog>
    </Screen>
  );
}
